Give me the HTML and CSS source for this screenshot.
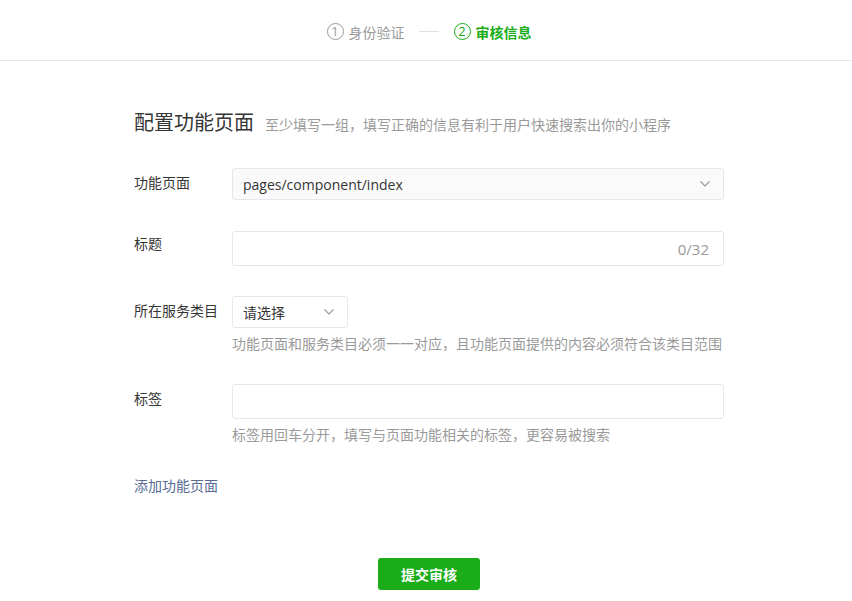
FILE: index.html
```html
<!DOCTYPE html>
<html lang="zh-CN">
<head>
  <meta charset="UTF-8">
  <meta name="viewport" content="width=device-width, initial-scale=1.0">
  <title>审核信息</title>
  <link rel="stylesheet" href="styles.css">
</head>
<body>
  <header class="steps">
    <div class="step done"><span class="num">1</span>身份验证</div>
    <div class="step-line"></div>
    <div class="step current"><span class="num">2</span>审核信息</div>
  </header>

  <div class="container">
    <h2 class="title">配置功能页面<span class="sub">至少填写一组，填写正确的信息有利于用户快速搜索出你的小程序</span></h2>

    <div class="row row-page">
      <label>功能页面</label>
      <div class="field">
        <div class="select wide">
          <span>pages/component/index</span>
          <svg class="arrow" width="12" height="8" viewBox="0 0 12 8"><path d="M1.5 1.5 L6 6 L10.5 1.5" fill="none" stroke="#999" stroke-width="1.1"/></svg>
        </div>
      </div>
    </div>

    <div class="row row-title">
      <label>标题</label>
      <div class="field">
        <div class="input"><span class="count">0/32</span></div>
      </div>
    </div>

    <div class="row row-cat">
      <label>所在服务类目</label>
      <div class="field">
        <div class="select small">
          <span>请选择</span>
          <svg class="arrow" width="12" height="8" viewBox="0 0 12 8"><path d="M1.5 1.5 L6 6 L10.5 1.5" fill="none" stroke="#999" stroke-width="1.1"/></svg>
        </div>
        <p class="hint">功能页面和服务类目必须一一对应，且功能页面提供的内容必须符合该类目范围</p>
      </div>
    </div>

    <div class="row row-tag">
      <label>标签</label>
      <div class="field">
        <div class="input"></div>
        <p class="hint">标签用回车分开，填写与页面功能相关的标签，更容易被搜索</p>
      </div>
    </div>

    <a class="add-link" href="#">添加功能页面</a>

    <div class="actions">
      <button class="btn-submit">提交审核</button>
    </div>
  </div>
</body>
</html>
```

FILE: styles.css
```css
body {
  margin: 0;
  padding: 0;
  background: #fff;
  color: #353535;
  font-family: "Open Sans", "Noto Sans CJK SC", sans-serif;
  font-size: 14px;
}
.steps {
  height: 61px;
  box-sizing: border-box;
  border-bottom: 1px solid #e7e7eb;
  display: flex;
  align-items: center;
  justify-content: center;
  padding: 3px 0 0 6px;
  font-size: 14px;
}
.step {
  display: flex;
  align-items: center;
  color: #9a9a9a;
}
.step.current {
  color: #1aad19;
  font-weight: bold;
}
.step .num {
  width: 15px;
  height: 15px;
  border: 1px solid currentColor;
  border-radius: 50%;
  display: inline-flex;
  align-items: center;
  justify-content: center;
  font-size: 13px;
  font-weight: normal;
  margin-right: 5px;
  line-height: 1;
}
.step-line {
  width: 20px;
  height: 1px;
  background: #e0e0e0;
  margin: 0 15px 0 14px;
}
.container {
  width: 590px;
  margin-left: 134px;
  padding-top: 48px;
}
.title {
  margin: 0 0 29px;
  font-size: 20px;
  font-weight: normal;
  color: #353535;
  line-height: 28px;
}
.title .sub {
  font-size: 14px;
  color: #9a9a9a;
  margin-left: 11px;
}
.row {
  display: flex;
}
.row label {
  width: 98px;
  flex-shrink: 0;
  padding-top: 6px;
  line-height: 18px;
}
.row-title label {
  padding-top: 4px;
}
.field {
  flex-grow: 1;
}
.select, .input {
  box-sizing: border-box;
  border: 1px solid #e7e7eb;
  border-radius: 3px;
  display: flex;
  align-items: center;
  padding: 0 10px;
}
.select {
  height: 32px;
  background: #fafafa;
  justify-content: space-between;
  color: #353535;
}
.select .arrow {
  margin-right: 2px;
}
.select.small {
  width: 116px;
  background: #fff;
}
.input {
  height: 35px;
  justify-content: flex-end;
}
.count {
  color: #9a9a9a;
  font-size: 15px;
  margin-right: 4px;
}
.row-page { margin-bottom: 31px; }
.row-title { margin-bottom: 30px; }
.row-cat { margin-bottom: 30px; }
.hint {
  margin: 6px 0 0;
  font-size: 14px;
  color: #9a9a9a;
  line-height: 20px;
}
.add-link {
  display: block;
  margin-top: 31px;
  color: #576b95;
  text-decoration: none;
  line-height: 20px;
}
.actions {
  display: flex;
  justify-content: center;
  margin-top: 62px;
}
.btn-submit {
  width: 102px;
  height: 32px;
  border: none;
  border-radius: 3px;
  background: #1aad19;
  color: #fff;
  font-family: "Noto Sans CJK SC", sans-serif;
  font-size: 14px;
  font-weight: bold;
}
```
